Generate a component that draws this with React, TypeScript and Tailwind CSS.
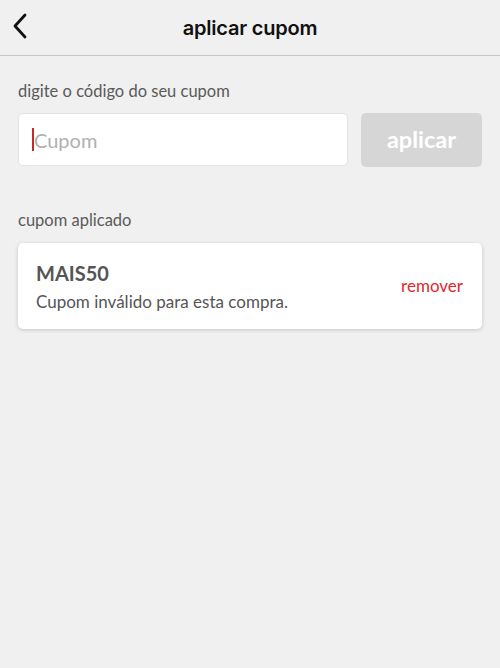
import React from "react";

export default function App() {
  return (
    <div className="w-[500px] h-[668px] bg-[#f0f0f0] font-['Lato',sans-serif] text-[#555]">
      {/* Header */}
      <header className="relative h-[56px] flex items-center justify-center border-b border-[#c6c6c6]">
        <button className="absolute left-[10px] top-[12px] w-[20px] h-[28px] flex items-center justify-center">
          <svg width="16" height="26" viewBox="0 0 16 26" fill="none">
            <path d="M13 2L3 13L13 24" stroke="#111" strokeWidth="2.8" strokeLinecap="round" strokeLinejoin="round" />
          </svg>
        </button>
        <h1 className="font-['Inter',sans-serif] text-[20px] font-semibold text-[#111] tracking-[-0.2px]">
          aplicar cupom
        </h1>
      </header>

      <section className="px-[18px] pt-[24px]">
        <p className="text-[16.5px] leading-[22px] text-[#5a5a5a]">digite o código do seu cupom</p>
        <div className="flex gap-[13px] mt-[11px]">
          <div className="flex-1 h-[53px] bg-white rounded-[5px] border border-[#e4e4e4] flex items-center pl-[13px]">
            <span className="w-[2px] h-[23px] bg-[#c62828]" />
            <span className="text-[20px] text-[#b0b0b0]">Cupom</span>
          </div>
          <button className="w-[121px] h-[54px] bg-[#d6d6d6] rounded-[5px] text-white text-[23.5px] font-bold">
            aplicar
          </button>
        </div>

        <p className="text-[16.5px] leading-[22px] mt-[42px] text-[#5a5a5a]">cupom aplicado</p>
        <div className="mt-[12px] h-[86px] bg-white rounded-[5px] shadow-[0_1px_4px_rgba(0,0,0,0.18)] flex items-center justify-between pl-[18px] pr-[19px]">
          <div>
            <div className="text-[20px] font-bold leading-[26px] text-[#555]">MAIS50</div>
            <div className="text-[17px] leading-[22px] mt-[5px] text-[#555]">Cupom inválido para esta compra.</div>
          </div>
          <button className="text-[17px] text-[#e0282a]">remover</button>
        </div>
      </section>
    </div>
  );
}
